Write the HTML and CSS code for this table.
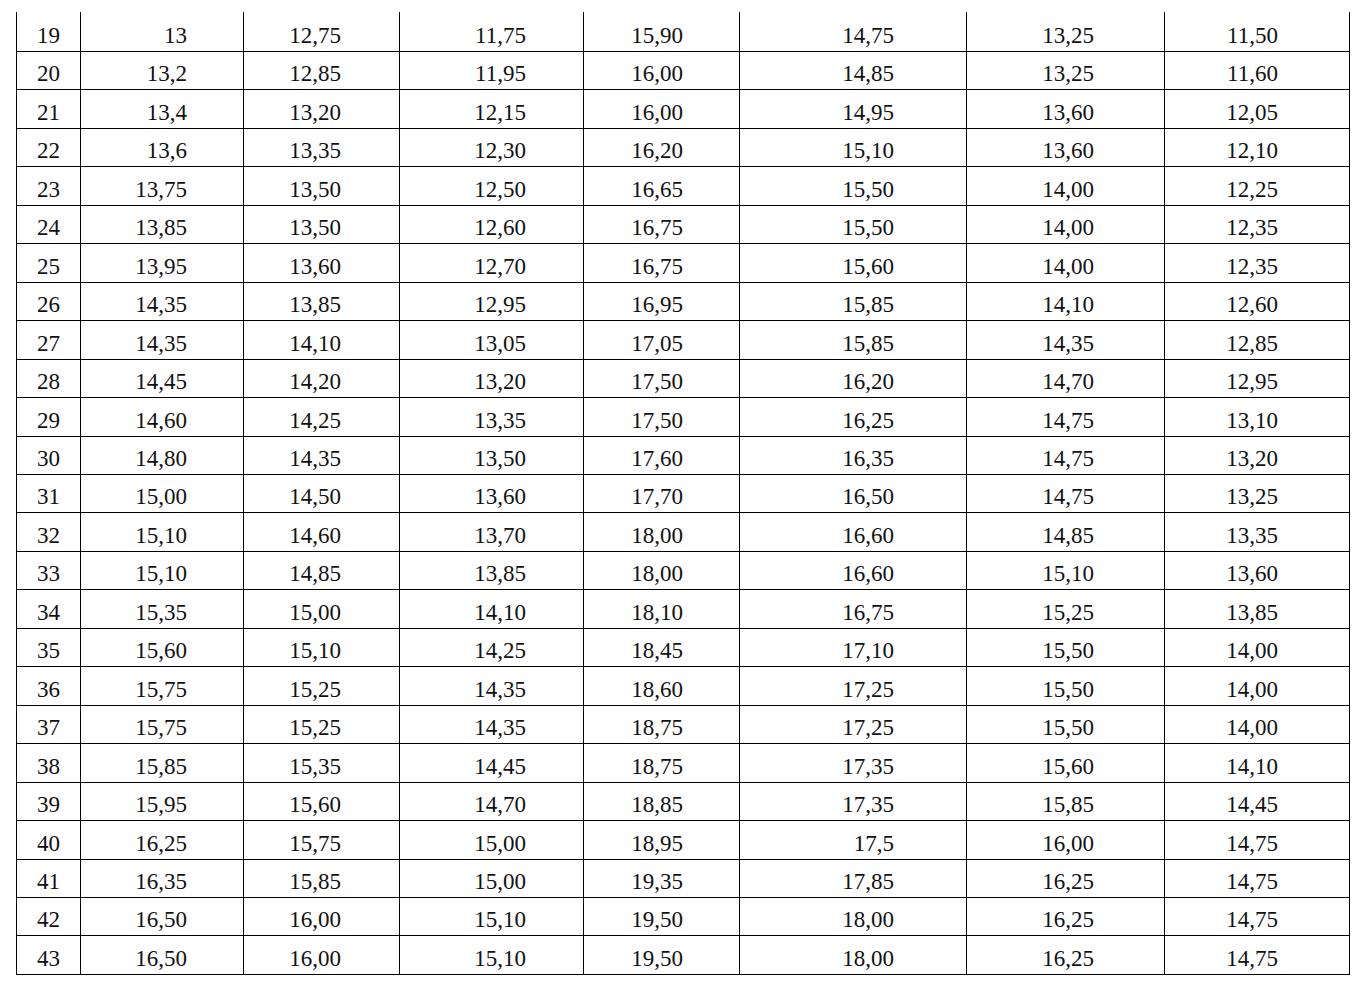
FILE: index.html
```html
<!DOCTYPE html>
<html lang="ru">
<head>
<meta charset="utf-8">
<title>Таблица</title>
<link rel="stylesheet" href="styles.css">
</head>
<body>
<div class="page">
<table class="data">
<colgroup>
<col class="c1"><col class="c2"><col class="c3"><col class="c4"><col class="c5"><col class="c6"><col class="c7"><col class="c8">
</colgroup>
<tbody>
<tr><td>19</td><td>13</td><td>12,75</td><td>11,75</td><td>15,90</td><td>14,75</td><td>13,25</td><td>11,50</td></tr>
<tr><td>20</td><td>13,2</td><td>12,85</td><td>11,95</td><td>16,00</td><td>14,85</td><td>13,25</td><td>11,60</td></tr>
<tr><td>21</td><td>13,4</td><td>13,20</td><td>12,15</td><td>16,00</td><td>14,95</td><td>13,60</td><td>12,05</td></tr>
<tr><td>22</td><td>13,6</td><td>13,35</td><td>12,30</td><td>16,20</td><td>15,10</td><td>13,60</td><td>12,10</td></tr>
<tr><td>23</td><td>13,75</td><td>13,50</td><td>12,50</td><td>16,65</td><td>15,50</td><td>14,00</td><td>12,25</td></tr>
<tr><td>24</td><td>13,85</td><td>13,50</td><td>12,60</td><td>16,75</td><td>15,50</td><td>14,00</td><td>12,35</td></tr>
<tr><td>25</td><td>13,95</td><td>13,60</td><td>12,70</td><td>16,75</td><td>15,60</td><td>14,00</td><td>12,35</td></tr>
<tr><td>26</td><td>14,35</td><td>13,85</td><td>12,95</td><td>16,95</td><td>15,85</td><td>14,10</td><td>12,60</td></tr>
<tr><td>27</td><td>14,35</td><td>14,10</td><td>13,05</td><td>17,05</td><td>15,85</td><td>14,35</td><td>12,85</td></tr>
<tr><td>28</td><td>14,45</td><td>14,20</td><td>13,20</td><td>17,50</td><td>16,20</td><td>14,70</td><td>12,95</td></tr>
<tr><td>29</td><td>14,60</td><td>14,25</td><td>13,35</td><td>17,50</td><td>16,25</td><td>14,75</td><td>13,10</td></tr>
<tr><td>30</td><td>14,80</td><td>14,35</td><td>13,50</td><td>17,60</td><td>16,35</td><td>14,75</td><td>13,20</td></tr>
<tr><td>31</td><td>15,00</td><td>14,50</td><td>13,60</td><td>17,70</td><td>16,50</td><td>14,75</td><td>13,25</td></tr>
<tr><td>32</td><td>15,10</td><td>14,60</td><td>13,70</td><td>18,00</td><td>16,60</td><td>14,85</td><td>13,35</td></tr>
<tr><td>33</td><td>15,10</td><td>14,85</td><td>13,85</td><td>18,00</td><td>16,60</td><td>15,10</td><td>13,60</td></tr>
<tr><td>34</td><td>15,35</td><td>15,00</td><td>14,10</td><td>18,10</td><td>16,75</td><td>15,25</td><td>13,85</td></tr>
<tr><td>35</td><td>15,60</td><td>15,10</td><td>14,25</td><td>18,45</td><td>17,10</td><td>15,50</td><td>14,00</td></tr>
<tr><td>36</td><td>15,75</td><td>15,25</td><td>14,35</td><td>18,60</td><td>17,25</td><td>15,50</td><td>14,00</td></tr>
<tr><td>37</td><td>15,75</td><td>15,25</td><td>14,35</td><td>18,75</td><td>17,25</td><td>15,50</td><td>14,00</td></tr>
<tr><td>38</td><td>15,85</td><td>15,35</td><td>14,45</td><td>18,75</td><td>17,35</td><td>15,60</td><td>14,10</td></tr>
<tr><td>39</td><td>15,95</td><td>15,60</td><td>14,70</td><td>18,85</td><td>17,35</td><td>15,85</td><td>14,45</td></tr>
<tr><td>40</td><td>16,25</td><td>15,75</td><td>15,00</td><td>18,95</td><td>17,5</td><td>16,00</td><td>14,75</td></tr>
<tr><td>41</td><td>16,35</td><td>15,85</td><td>15,00</td><td>19,35</td><td>17,85</td><td>16,25</td><td>14,75</td></tr>
<tr><td>42</td><td>16,50</td><td>16,00</td><td>15,10</td><td>19,50</td><td>18,00</td><td>16,25</td><td>14,75</td></tr>
<tr><td>43</td><td>16,50</td><td>16,00</td><td>15,10</td><td>19,50</td><td>18,00</td><td>16,25</td><td>14,75</td></tr>
</tbody>
</table>
</div>
</body>
</html>
```
FILE: styles.css
```css
html, body {
  margin: 0;
  padding: 0;
  background: #ffffff;
}

.page {
  padding: 12px 0 0 16px;
}

.data {
  border-collapse: separate;
  border-spacing: 0;
  table-layout: fixed;
  width: 1334px;
  font-family: "Liberation Serif", "Times New Roman", serif;
  font-size: 23px;
  line-height: 23px;
  color: #111111;
}

.c1 { width: 64px; }
.c2 { width: 163px; }
.c3 { width: 156px; }
.c4 { width: 184px; }
.c5 { width: 156px; }
.c6 { width: 227px; }
.c7 { width: 198px; }
.c8 { width: 186px; }

.data td {
  box-sizing: border-box;
  height: 38.46px;
  padding: 0 0 4px 0;
  vertical-align: bottom;
  text-align: right;
  white-space: nowrap;
  border-left: 1px solid #000000;
  border-bottom: 1px solid #000000;
}

.data tr:first-child td {
  height: 40px;
}

.data td:nth-child(1) { text-align: center; padding-right: 0; }
.data td:nth-child(2) { padding-right: 56px; }
.data td:nth-child(3) { padding-right: 58px; }
.data td:nth-child(4) { padding-right: 57px; }
.data td:nth-child(5) { padding-right: 56px; }
.data td:nth-child(6) { padding-right: 72px; }
.data td:nth-child(7) { padding-right: 70px; }
.data td:nth-child(8) {
  padding-right: 71px;
  border-right: 1px solid #000000;
}
```
